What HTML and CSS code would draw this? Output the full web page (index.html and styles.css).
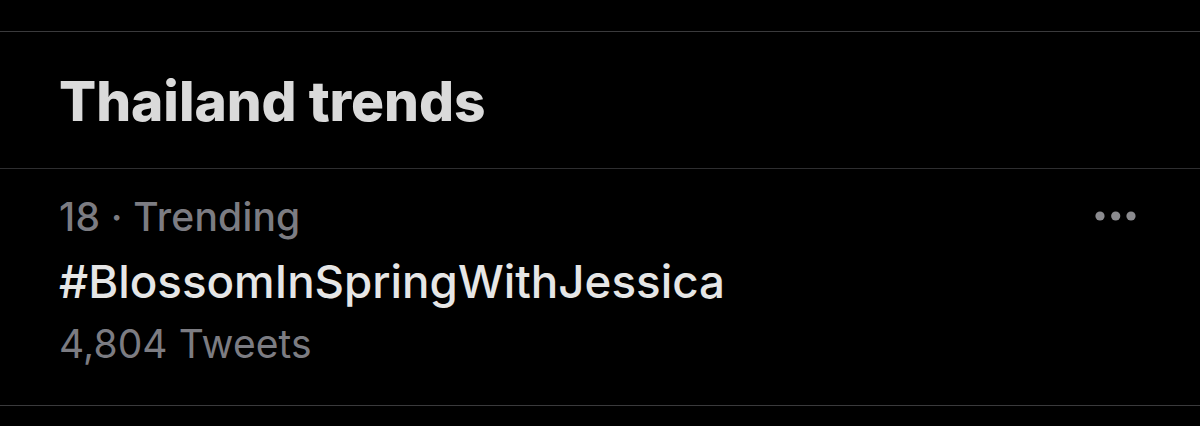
FILE: index.html
```html
<!DOCTYPE html>
<html>
<head>
<meta charset="utf-8">
<link rel="stylesheet" href="styles.css">
</head>
<body>
<div class="page">
  <div class="topgap"></div>
  <section class="header">
    <h2 class="title">Thailand trends</h2>
  </section>
  <div class="trend">
    <div class="trend-text">
      <div class="meta">18 · Trending</div>
      <div class="tag">#BlossomInSpringWithJessica</div>
      <div class="count">4,804 Tweets</div>
    </div>
    <div class="more">
      <svg width="42" height="10" viewBox="0 0 42 10"><circle cx="5" cy="5" r="4.6" fill="#8b8b8f"/><circle cx="20.7" cy="5" r="4.6" fill="#8b8b8f"/><circle cx="36" cy="5" r="4.6" fill="#8b8b8f"/></svg>
    </div>
  </div>
</div>
</body>
</html>
```
FILE: styles.css
```css
html, body {
  margin: 0;
  padding: 0;
  background: #000;
}
.page {
  width: 1200px;
  height: 426px;
  background: #000;
  font-family: Inter, "Noto Sans", sans-serif;
  overflow: hidden;
}
.topgap {
  height: 31px;
  border-bottom: 1px solid #3a3a3c;
}
.header {
  height: 136px;
  display: flex;
  align-items: center;
  padding-left: 59px;
  border-bottom: 1px solid #2e2e30;
}
.title {
  margin: 0;
  font-size: 55px;
  font-weight: 800;
  color: #dadada;
  letter-spacing: -0.05px;
  line-height: 1;
  padding-top: 2px;
}
.trend {
  display: flex;
  justify-content: space-between;
  padding: 28px 63px 41px 59px;
  border-bottom: 1px solid #3a3a3c;
}
.trend-text {
  display: flex;
  flex-direction: column;
}
.meta {
  font-size: 39px;
  line-height: 40px;
  color: #7c7c82;
  font-weight: 500;
  letter-spacing: 0.2px;
}
.tag {
  margin-top: 20px;
  font-size: 45.7px;
  line-height: 50px;
  color: #e6e6e6;
  font-weight: 500;
}
.count {
  margin-top: 17px;
  font-size: 39px;
  line-height: 40px;
  color: #7c7c82;
  font-weight: 400;
  letter-spacing: 0.1px;
}
.more {
  padding-top: 14px;
}
.more svg {
  display: block;
}
```
